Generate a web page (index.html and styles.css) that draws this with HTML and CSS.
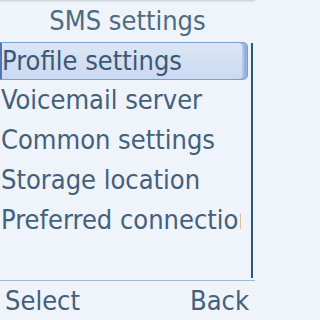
FILE: index.html
```
<!DOCTYPE html>
<html>
<head>
<meta charset="utf-8">
<link rel="stylesheet" href="styles.css">
</head>
<body>
<div class="screen">
  <div class="title">SMS settings</div>
  <div class="main">
    <ul class="menu">
      <li class="item selected"><span class="label">Profile settings</span></li>
      <li class="item"><span class="label">Voicemail server</span></li>
      <li class="item"><span class="label">Common settings</span></li>
      <li class="item"><span class="label">Storage location</span></li>
      <li class="item"><span class="label">Preferred connection</span></li>
    </ul>
    <div class="scrollbar"></div>
  </div>
  <div class="softkeys">
    <span class="key">Select</span>
    <span class="key">Back</span>
  </div>
</div>
</body>
</html>
```
FILE: styles.css
```
html, body {
  margin: 0;
  padding: 0;
}
body {
  width: 255px;
  height: 320px;
  overflow: hidden;
  background: #eef4fa;
}
.screen {
  width: 255px;
  height: 320px;
  display: flex;
  flex-direction: column;
  font-family: "DejaVu Sans Condensed", "DejaVu Sans", sans-serif;
  font-stretch: condensed;
  font-size: 27px;
  color: #43607c;
  background: linear-gradient(to bottom, #c9ced3 0px, #eaf0f6 2px, #eef4fa 4px);
}
.title {
  height: 40px;
  line-height: 41px;
  text-align: center;
  color: #4d6b84;
}
.main {
  height: 240px;
  display: flex;
}
.menu {
  list-style: none;
  margin: 0;
  padding: 0;
  width: 248px;
}
.item {
  height: 40px;
  line-height: 40px;
  box-sizing: border-box;
  padding-left: 1px;
}
.label {
  display: block;
  overflow: hidden;
  white-space: nowrap;
  width: 240px;
}
.item.selected {
  height: 38px;
  margin: 2px 0 0;
  line-height: 36px;
  border: 1px solid #7e9fce;
  border-left: 2px solid #4f77b4;
  border-radius: 0 5px 5px 0;
  background: linear-gradient(to bottom, #dce6f6, #cbd9f0);
  box-shadow: inset -3px 0 0 #93b1dc, inset -5px 0 0 #b3c8e8;
  padding-left: 0;
  color: #3d5874;
}
.scrollbar {
  width: 2px;
  margin: 3px 0 2px 3px;
  background: #2c5a7e;
}
.softkeys {
  flex: 1;
  border-top: 1px solid #9db8d4;
  display: flex;
  justify-content: space-between;
  line-height: 39px;
  padding: 0 6px 0 5px;
}
```
